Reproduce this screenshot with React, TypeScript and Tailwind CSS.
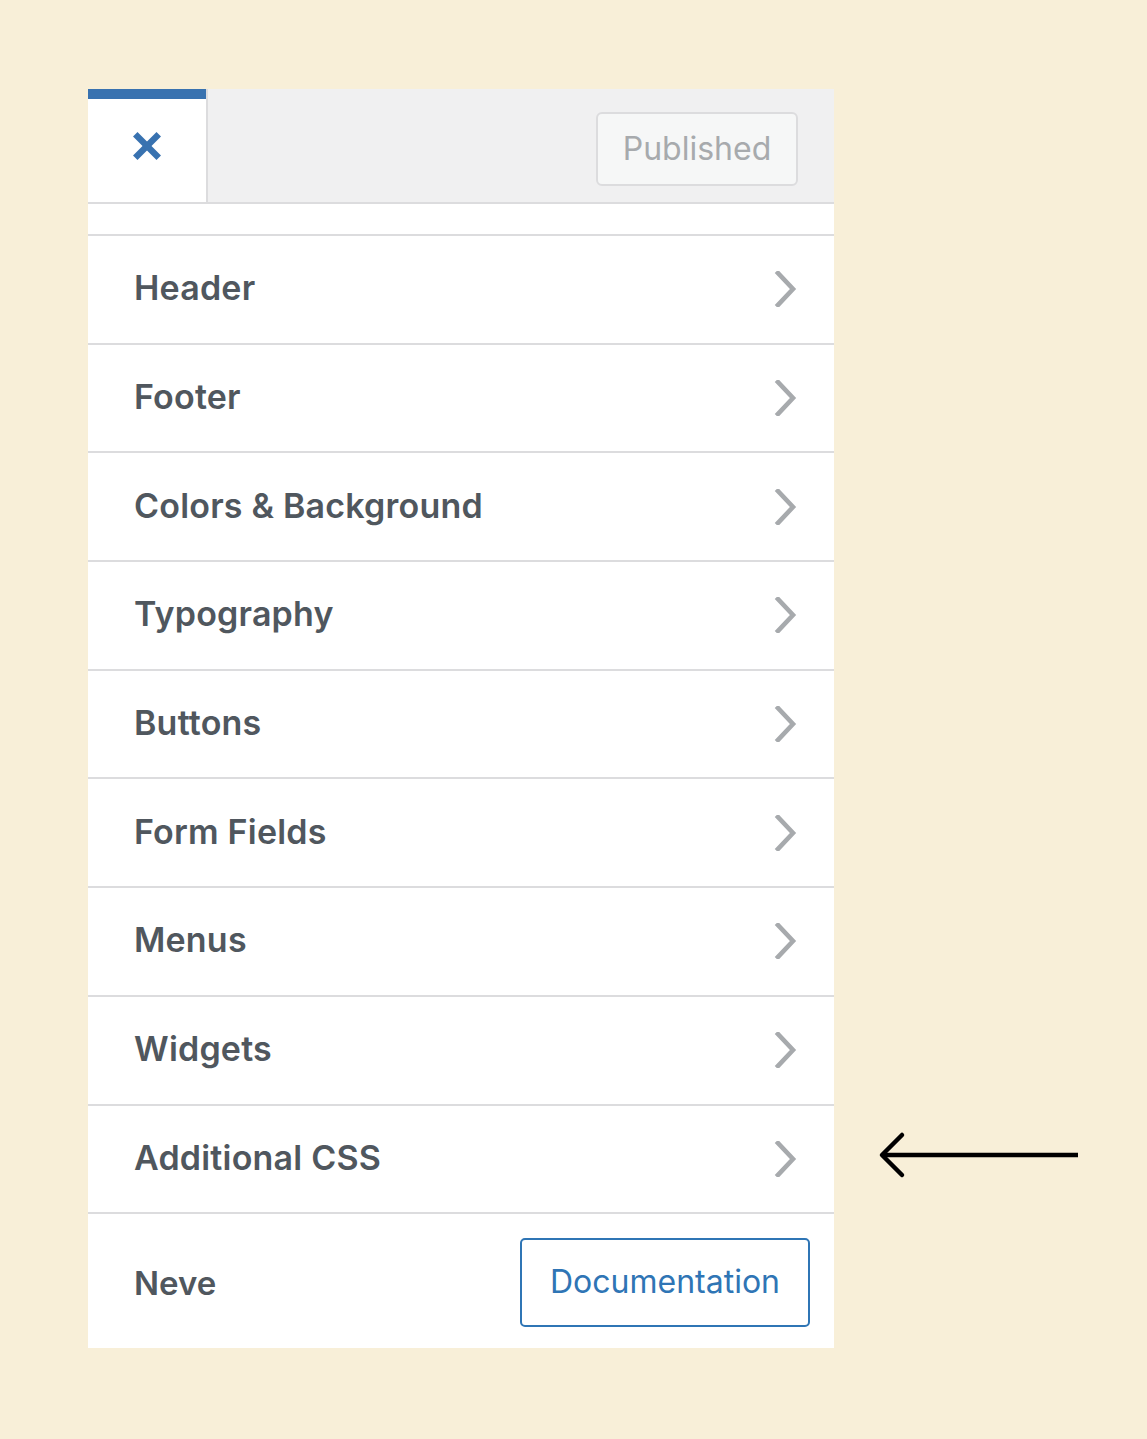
import { X } from 'lucide-react'

const SECTIONS = ['Header', 'Footer', 'Colors & Background', 'Typography', 'Buttons', 'Form Fields', 'Menus', 'Widgets', 'Additional CSS']

function Chevron() {
  return (
    <svg width="24" height="36" viewBox="0 0 24 36" fill="none" className="shrink-0">
      <path d="M4 2 L19 18 L4 34" stroke="#a7aaad" strokeWidth="4.6" strokeLinecap="square" strokeLinejoin="miter" />
    </svg>
  )
}

export default function App() {
  return (
    <div className="relative min-h-screen w-full bg-[#f8efd8] pt-[89px] pl-[88px] font-['Inter',sans-serif]">
      {/* Customizer panel */}
      <div className="w-[746px] bg-white">
        {/* Top bar */}
        <div className="flex h-[115px] border-b-2 border-[#dcdcde]">
          <div className="flex w-[118px] items-center justify-center border-t-[10px] border-[#3872b0] bg-white pb-[9px]">
            <X className="h-[38px] w-[38px] text-[#3872b0]" strokeWidth={4} strokeLinecap="square" />
          </div>
          <div className="flex flex-1 items-center justify-end border-l-2 border-[#dcdcde] bg-[#f0f0f1] pr-[36px] pt-[7px]">
            <div className="flex h-[74px] w-[202px] items-center justify-center rounded-[6px] border-2 border-[#dcdcde] bg-[#f6f7f7] text-[32px] text-[#a7aaad]">
              Published
            </div>
          </div>
        </div>

        <div className="h-[30px]" />

        {SECTIONS.map((label) => (
          <div
            key={label}
            className="flex h-[108.7px] items-center justify-between border-t-2 border-[#dcdcde] pl-[46px] pr-[36px]"
          >
            <span className="mb-[3px] text-[34px] font-semibold tracking-[0.2px] text-[#50575e]">{label}</span>
            <Chevron />
          </div>
        ))}

        {/* Footer */}
        <div className="flex h-[136px] items-center justify-between border-t-2 border-[#dcdcde] pl-[46px] pr-[24px] pt-[2px]">
          <span className="mt-[4px] text-[33px] font-semibold text-[#50575e]">Neve</span>
          <div className="flex h-[89px] w-[290px] items-center justify-center rounded-[5px] border-2 border-[#2f75b5] text-[32px] text-[#2f75b5]">
            Documentation
          </div>
        </div>
      </div>

      {/* Annotation arrow */}
      <svg className="absolute left-[876px] top-[1130px]" width="206" height="50" viewBox="0 0 206 50" fill="none">
        <path d="M6 25 H202" stroke="#000" strokeWidth="4.5" />
        <path d="M26 5 L6 25 L26 45" stroke="#000" strokeWidth="4.5" strokeLinecap="round" strokeLinejoin="round" />
      </svg>
    </div>
  )
}
